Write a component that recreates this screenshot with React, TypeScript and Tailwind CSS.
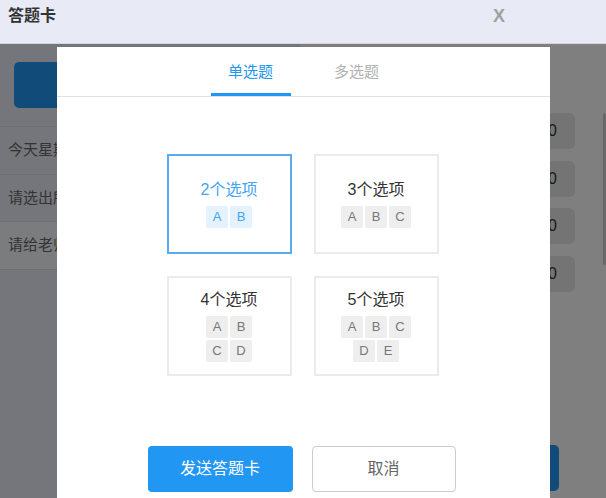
import React from 'react';

const font = "font-['Liberation_Sans','Noto_Sans_CJK_SC',sans-serif]";

type CardProps = { title: string; rows: string[][]; active?: boolean };

const Chip = ({ letter, active }: { letter: string; active?: boolean }) => (
  <div
    className={`w-[22px] h-[22px] rounded-[2px] flex items-center justify-center text-[13px] ${
      active ? 'bg-[#e3f2fd] text-[#42a5f5]' : 'bg-[#eeeeee] text-[#777777]'
    }`}
  >
    {letter}
  </div>
);

const OptionCard = ({ title, rows, active }: CardProps) => (
  <div
    className={`h-[100px] border-2 flex flex-col items-center justify-center ${
      active ? 'border-[#55acf5]' : 'border-[#ebebeb]'
    }`}
  >
    <div className={`text-[16px] leading-[20px] ${active ? 'text-[#42a5f5]' : 'text-[#333333]'}`}>{title}</div>
    <div className="mt-[6px] flex flex-col items-center gap-[2px]">
      {rows.map((r, i) => (
        <div key={i} className="flex gap-[2px]">
          {r.map((l) => (
            <Chip key={l} letter={l} active={active} />
          ))}
        </div>
      ))}
    </div>
  </div>
);

const questions = ['今天星期几？', '请选出所有正确答案', '请给老师打分'];

export default function App() {
  return (
    <div className={`relative w-[606px] h-[498px] overflow-hidden bg-white ${font}`}>
      {/* page header */}
      <div className="h-[44px] bg-[#e8eaf6] border-b border-[#d3d6e2] flex items-start justify-between pl-[8px] pr-[101px] pt-[6px]">
        <span className="text-[16px] leading-[20px] font-bold text-[#333333]">答题卡</span>
        <span className="text-[18px] leading-[20px] font-bold text-[#a0a0a0]">X</span>
      </div>

      {/* page body (under the mask) */}
      <div className="flex h-[454px]">
        <div className="w-[300px] bg-[#ebedf6] flex flex-col">
          <div className="ml-[14px] mt-[18px] w-[170px] h-[46px] rounded-[5px] bg-[#2196f3] text-white text-[15px] flex items-center justify-center">
            发起答题
          </div>
          <div className="mt-[18px] border-b border-[#dcdde6]">
            {questions.map((q, i) => (
              <div
                key={q}
                className={`h-[47.5px] border-t border-[#dcdde6] flex items-center pl-[8px] text-[15px] text-[#666666] ${
                  i === 2 ? 'bg-[#f7f8fd]' : ''
                }`}
              >
                {q}
              </div>
            ))}
          </div>
        </div>
        <div className="flex-1 flex flex-col">
          <div className="flex justify-end items-start pt-[69px]">
            <div className="flex flex-col gap-[11.7px]">
              {[0, 1, 2, 3].map((i) => (
                <div key={i} className="w-[100px] h-[36px] rounded-[6px] bg-[#e8e8e8] flex items-center justify-end pr-[18px] text-[16px] text-[#333333]">
                  100
                </div>
              ))}
            </div>
            <div className="ml-[28px] w-[3px] h-[152px] rounded-full bg-[#d0d0d0]" />
          </div>
          <div className="mt-auto mb-[7px] ml-auto mr-[47px] w-[120px] h-[46px] rounded-[5px] bg-[#2196f3]" />
        </div>
      </div>

      {/* mask + dialog */}
      <div className="absolute left-0 right-0 top-[44px] bottom-0 bg-black/50 flex items-start">
        <div className="ml-[57px] mt-[3px] w-[493px] h-[460px] bg-white flex flex-col">
          <div className="h-[50px] border-b border-[#e2e2e2] flex justify-center gap-[26px]">
            <div className="w-[80px] h-[49px] pt-1 border-b-[3px] border-[#2196f3] flex items-center justify-center text-[15px] text-[#2196f3]">
              单选题
            </div>
            <div className="w-[80px] h-[49px] pt-1 border-b-[3px] border-transparent flex items-center justify-center text-[15px] text-[#b0b0b0]">
              多选题
            </div>
          </div>

          <div className="mt-[57px] grid grid-cols-[125px_125px] gap-[22px] justify-center -translate-x-[1px]">
            <OptionCard title="2个选项" rows={[['A', 'B']]} active />
            <OptionCard title="3个选项" rows={[['A', 'B', 'C']]} />
            <OptionCard title="4个选项" rows={[['A', 'B'], ['C', 'D']]} />
            <OptionCard title="5个选项" rows={[['A', 'B', 'C'], ['D', 'E']]} />
          </div>

          <div className="mt-[70px] flex justify-center gap-[19px] -translate-x-[2px]">
            <button className="w-[145px] h-[46px] rounded-[4px] bg-[#2196f3] text-white text-[16px]">发送答题卡</button>
            <button className="w-[144px] h-[46px] rounded-[4px] border border-[#cccccc] bg-white text-[#666666] text-[16px]">取消</button>
          </div>
        </div>
      </div>
    </div>
  );
}
